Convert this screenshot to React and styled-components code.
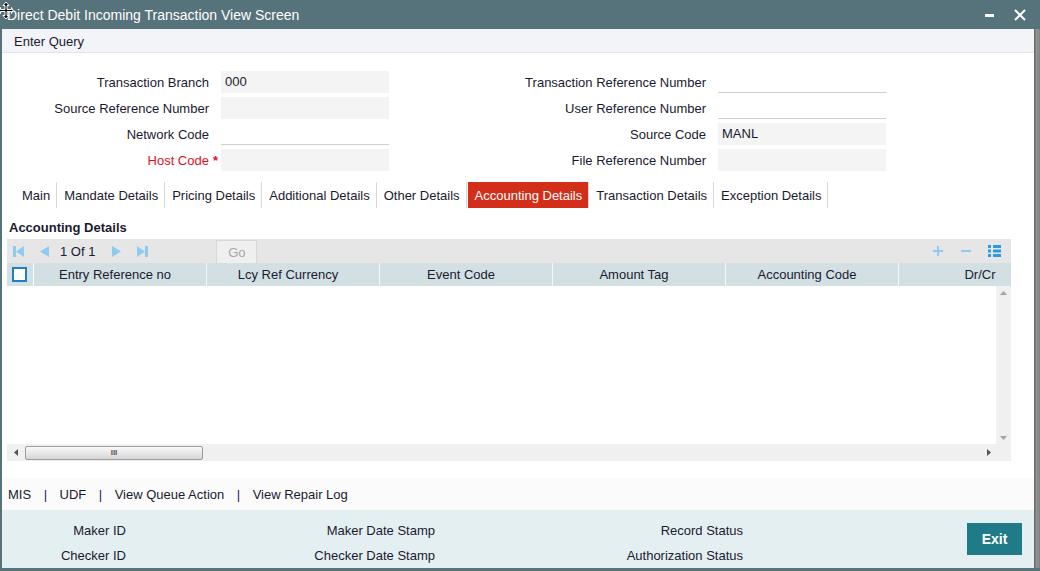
import React from 'react';
import styled, { createGlobalStyle } from 'styled-components';

const GlobalStyle = createGlobalStyle`
  html, body { margin: 0; padding: 0; }
  body {
    font-family: "Liberation Sans", Arial, sans-serif;
    font-size: 13px;
    color: #1a1a30;
    background: #fff;
  }
  * { box-sizing: border-box; }
`;

const Window = styled.div`
  position: relative;
  width: 1040px;
  height: 571px;
  display: flex;
  flex-direction: column;
  background: #56727a;
  padding-bottom: 3px;
  overflow: hidden;
`;

const TitleBar = styled.div`
  height: 29px;
  flex: none;
  display: flex;
  align-items: center;
  padding: 0 14px 0 7px;
  color: #fff;
  font-size: 14px;
`;

const Title = styled.div`
  flex: 1;
  white-space: nowrap;
`;

const WinControls = styled.div`
  display: flex;
  align-items: center;
  gap: 20px;
`;

const Cursor = styled.svg`
  position: absolute;
  left: -1px;
  top: 1px;
`;

const Body = styled.div`
  flex: 1;
  min-height: 0;
  display: flex;
`;

const Main = styled.div`
  flex: 1;
  margin-left: 2px;
  background: #fff;
  display: flex;
  flex-direction: column;
  min-width: 0;
`;

const Rail = styled.div`
  width: 6px;
  flex: none;
  background: linear-gradient(90deg, #6a6a6a 0, #6a6a6a 1px, #949494 2px, #828282 100%);
`;

const MenuBar = styled.div`
  height: 24px;
  flex: none;
  display: flex;
  align-items: center;
  padding: 1px 0 0 12px;
  background: #f3f4f7;
  border-bottom: 1px solid #e2e3e8;
`;

const Form = styled.div`
  display: flex;
  padding-top: 18px;
  flex: none;
`;

const FormCol = styled.div`
  display: grid;
  grid-template-columns: ${p => p.$label}px 168px;
  column-gap: 12px;
  row-gap: 4px;
  grid-auto-rows: 22px;
  align-items: center;
`;

const Label = styled.div`
  text-align: right;
  white-space: nowrap;
  color: ${p => (p.$required ? '#e0101e' : 'inherit')};
`;

const Star = styled.span`
  margin-left: 4px;
  margin-right: -9px;
  font-weight: bold;
`;

const Field = styled.div`
  height: 22px;
  display: flex;
  align-items: center;
  padding-left: 4px;
  background: ${p => (p.$ro ? '#f4f4f4' : '#fff')};
  border-bottom: 1px solid ${p => (p.$ro ? '#f4f4f4' : '#cfcfcf')};
`;

const TabBar = styled.div`
  display: flex;
  height: 26px;
  margin-top: 11px;
  padding-left: 13px;
  flex: none;
`;

const Tab = styled.div`
  display: flex;
  align-items: center;
  padding: 0 6px 0 7px;
  white-space: nowrap;
  border-right: 1px solid #d8d8d8;
  background: ${p => (p.$active ? '#d32e1a' : 'transparent')};
  color: ${p => (p.$active ? '#fff' : 'inherit')};
  ${p => (p.$active ? 'margin-left: 1px;' : '')}
`;

const SectionTitle = styled.div`
  margin-top: 12px;
  line-height: 16px;
  padding-left: 7px;
  font-weight: bold;
  flex: none;
`;

const Grid = styled.div`
  margin: 3px 0 0 5px;
  width: 1004px;
  height: 222px;
  flex: none;
  display: flex;
  flex-direction: column;
  background: #f0f0f0;
`;

const GridToolbar = styled.div`
  height: 24px;
  flex: none;
  display: flex;
  align-items: center;
  background: #e6e6e6;
`;

const PagerIcon = styled.svg`
  margin-left: ${p => p.$ml}px;
  flex: none;
`;

const PageText = styled.span`
  margin-left: ${p => p.$ml}px;
  white-space: nowrap;
`;

const GoButton = styled.div`
  margin-left: 68px;
  width: 41px;
  height: 23px;
  align-self: flex-end;
  display: flex;
  align-items: center;
  justify-content: center;
  color: #a8a8a8;
  background: #efefef;
  border: 1px solid #d8d8d8;
  border-bottom: none;
`;

const ToolIcons = styled.div`
  margin-left: auto;
  margin-right: 10px;
  display: flex;
  align-items: center;
  gap: 16px;
`;

const HeaderRow = styled.div`
  height: 23px;
  flex: none;
  display: flex;
  overflow: hidden;
  background: #d2e0e4;
`;

const CheckCell = styled.div`
  width: 27px;
  flex: none;
  display: flex;
  align-items: center;
  padding-left: 5px;
  border-right: 1px solid #fff;
`;

const CheckBox = styled.div`
  width: 15px;
  height: 15px;
  background: #fff;
  border: 2px solid #1f7fc0;
`;

const HeadCell = styled.div`
  width: 173px;
  flex: none;
  display: flex;
  align-items: center;
  justify-content: center;
  padding-right: 10px;
  border-right: 1px solid #f4f8f9;
  white-space: nowrap;
`;

const GridBody = styled.div`
  height: 158px;
  flex: none;
  display: flex;
`;

const Rows = styled.div`
  flex: 1;
  background: #fff;
`;

const VScroll = styled.div`
  width: 15px;
  flex: none;
  display: flex;
  flex-direction: column;
  justify-content: space-between;
  align-items: center;
  padding: 5px 0 4px;
  background: #f0f0f0;
`;

const HScroll = styled.div`
  height: 17px;
  flex: none;
  display: flex;
  align-items: center;
  background: #f0f0f0;
`;

const ArrowBox = styled.div`
  width: ${p => p.$w}px;
  flex: none;
  display: flex;
  align-items: center;
  justify-content: center;
`;

const Thumb = styled.div`
  width: 178px;
  height: 14px;
  flex: none;
  display: flex;
  align-items: center;
  justify-content: center;
  border: 1px solid #9e9e9e;
  border-radius: 2px;
  background: linear-gradient(180deg, #f7f7f7 0%, #e8e8e8 50%, #d6d6d6 100%);
  font-size: 8px;
  color: #555;
  font-weight: bold;
`;

const Track = styled.div`
  flex: 1;
`;

const Corner = styled.div`
  width: 15px;
  height: 17px;
  flex: none;
  background: #f0f0f0;
`;

const LinksRow = styled.div`
  margin-top: 17px;
  height: 32px;
  flex: none;
  display: flex;
  align-items: center;
  padding-left: 6px;
  background: #fbfbfb;
  white-space: nowrap;
`;

const Pipe = styled.span`
  padding: 0 12.5px;
  color: #2a1a5e;
`;

const Footer = styled.div`
  flex: 1;
  display: flex;
  align-items: center;
  background: #e4eff1;
`;

const AuditGrid = styled.div`
  display: grid;
  grid-template-columns: 124px 309px 308px;
  grid-auto-rows: 25px;
  align-items: center;
  align-self: flex-start;
  padding-top: 8px;
`;

const AuditLabel = styled.div`
  text-align: right;
  white-space: nowrap;
`;

const ExitButton = styled.div`
  margin-left: auto;
  margin-right: 12px;
  width: 55px;
  height: 32px;
  display: flex;
  align-items: center;
  justify-content: center;
  background: #1f7b87;
  color: #fff;
  font-size: 14px;
  font-weight: bold;
`;

const leftFields = [
  { label: 'Transaction Branch', value: '000', ro: true },
  { label: 'Source Reference Number', value: '', ro: true },
  { label: 'Network Code', value: '', ro: false },
  { label: 'Host Code', value: '', ro: true, required: true },
];

const rightFields = [
  { label: 'Transaction Reference Number', value: '', ro: false },
  { label: 'User Reference Number', value: '', ro: false },
  { label: 'Source Code', value: 'MANL', ro: true },
  { label: 'File Reference Number', value: '', ro: true },
];

const tabs = [
  'Main',
  'Mandate Details',
  'Pricing Details',
  'Additional Details',
  'Other Details',
  'Accounting Details',
  'Transaction Details',
  'Exception Details',
];

const columns = [
  'Entry Reference no',
  'Lcy Ref Currency',
  'Event Code',
  'Amount Tag',
  'Accounting Code',
  'Dr/Cr',
];

const PAGER = '#8ecbef';

function FieldCol({ fields, labelWidth }) {
  return (
    <FormCol $label={labelWidth}>
      {fields.map(f => (
        <React.Fragment key={f.label}>
          <Label $required={f.required}>
            {f.label}
            {f.required && <Star>*</Star>}
          </Label>
          <Field $ro={f.ro}>{f.value}</Field>
        </React.Fragment>
      ))}
    </FormCol>
  );
}

export default function App() {
  return (
    <>
      <GlobalStyle />
      <Window>
        <TitleBar>
          <Title>Direct Debit Incoming Transaction View Screen</Title>
          <WinControls>
            <svg width="9" height="12" viewBox="0 0 9 12">
              <rect x="0" y="5" width="9" height="3" fill="#fff" />
            </svg>
            <svg width="12" height="12" viewBox="0 0 12 12">
              <path d="M1 1 L11 11 M11 1 L1 11" stroke="#fff" strokeWidth="2" />
            </svg>
          </WinControls>
        </TitleBar>
        <Cursor width="14" height="19" viewBox="0 0 14 19">
          <path
            d="M7 1 L10 4.5 L8 4.5 L8 8.5 L12.5 8.5 L12.5 6.5 L14 9.5 L12.5 12.5 L12.5 10.5 L8 10.5 L8 14.5 L10 14.5 L7 18 L4 14.5 L6 14.5 L6 10.5 L1.5 10.5 L1.5 12.5 L0 9.5 L1.5 6.5 L1.5 8.5 L6 8.5 L6 4.5 L4 4.5 Z"
            fill="#000"
            stroke="#fff"
            strokeWidth="1"
          />
        </Cursor>
        <Body>
          <Main>
            <MenuBar>Enter Query</MenuBar>
            <Form>
              <FieldCol fields={leftFields} labelWidth={207} />
              <FieldCol fields={rightFields} labelWidth={317} />
            </Form>
            <TabBar>
              {tabs.map(t => (
                <Tab key={t} $active={t === 'Accounting Details'}>
                  {t}
                </Tab>
              ))}
            </TabBar>
            <SectionTitle>Accounting Details</SectionTitle>
            <Grid>
              <GridToolbar>
                <PagerIcon $ml={6} width="11" height="11" viewBox="0 0 11 11">
                  <rect x="0" y="0" width="3" height="11" fill={PAGER} />
                  <path d="M11 0 L3 5.5 L11 11 Z" fill={PAGER} />
                </PagerIcon>
                <PagerIcon $ml={15} width="10" height="11" viewBox="0 0 10 11">
                  <path d="M10 0 L1 5.5 L10 11 Z" fill={PAGER} />
                </PagerIcon>
                <PageText $ml={11}>1 Of 1</PageText>
                <PagerIcon $ml={17} width="10" height="11" viewBox="0 0 10 11">
                  <path d="M0 0 L9 5.5 L0 11 Z" fill={PAGER} />
                </PagerIcon>
                <PagerIcon $ml={15} width="11" height="11" viewBox="0 0 11 11">
                  <path d="M0 0 L8 5.5 L0 11 Z" fill={PAGER} />
                  <rect x="8" y="0" width="3" height="11" fill={PAGER} />
                </PagerIcon>
                <GoButton>Go</GoButton>
                <ToolIcons>
                  <svg width="12" height="12" viewBox="0 0 12 12">
                    <path d="M6 1 V11 M1 6 H11" stroke="#8ecbef" strokeWidth="2" />
                  </svg>
                  <svg width="12" height="12" viewBox="0 0 12 12">
                    <path d="M1 6 H11" stroke="#8ecbef" strokeWidth="2" />
                  </svg>
                  <svg width="13" height="12" viewBox="0 0 13 12">
                    <rect x="0" y="0" width="3" height="3" fill="#2a9be0" />
                    <rect x="0" y="4.5" width="3" height="3" fill="#2a9be0" />
                    <rect x="0" y="9" width="3" height="3" fill="#2a9be0" />
                    <rect x="5" y="0" width="8" height="3" fill="#2a9be0" />
                    <rect x="5" y="4.5" width="8" height="3" fill="#2a9be0" />
                    <rect x="5" y="9" width="8" height="3" fill="#2a9be0" />
                  </svg>
                </ToolIcons>
              </GridToolbar>
              <HeaderRow>
                <CheckCell>
                  <CheckBox />
                </CheckCell>
                {columns.map(c => (
                  <HeadCell key={c}>{c}</HeadCell>
                ))}
              </HeaderRow>
              <GridBody>
                <Rows />
                <VScroll>
                  <svg width="7" height="4" viewBox="0 0 7 4">
                    <path d="M0 4 L3.5 0 L7 4 Z" fill="#a4a4a4" />
                  </svg>
                  <svg width="7" height="4" viewBox="0 0 7 4">
                    <path d="M0 0 L3.5 4 L7 0 Z" fill="#a4a4a4" />
                  </svg>
                </VScroll>
              </GridBody>
              <HScroll>
                <ArrowBox $w={18}>
                  <svg width="4" height="7" viewBox="0 0 4 7">
                    <path d="M4 0 L0 3.5 L4 7 Z" fill="#555" />
                  </svg>
                </ArrowBox>
                <Thumb>III</Thumb>
                <Track />
                <ArrowBox $w={15}>
                  <svg width="4" height="7" viewBox="0 0 4 7">
                    <path d="M0 0 L4 3.5 L0 7 Z" fill="#555" />
                  </svg>
                </ArrowBox>
                <Corner />
              </HScroll>
            </Grid>
            <LinksRow>
              MIS<Pipe>|</Pipe>UDF<Pipe>|</Pipe>View Queue Action<Pipe>|</Pipe>View Repair Log
            </LinksRow>
            <Footer>
              <AuditGrid>
                <AuditLabel>Maker ID</AuditLabel>
                <AuditLabel>Maker Date Stamp</AuditLabel>
                <AuditLabel>Record Status</AuditLabel>
                <AuditLabel>Checker ID</AuditLabel>
                <AuditLabel>Checker Date Stamp</AuditLabel>
                <AuditLabel>Authorization Status</AuditLabel>
              </AuditGrid>
              <ExitButton>Exit</ExitButton>
            </Footer>
          </Main>
          <Rail />
        </Body>
      </Window>
    </>
  );
}
